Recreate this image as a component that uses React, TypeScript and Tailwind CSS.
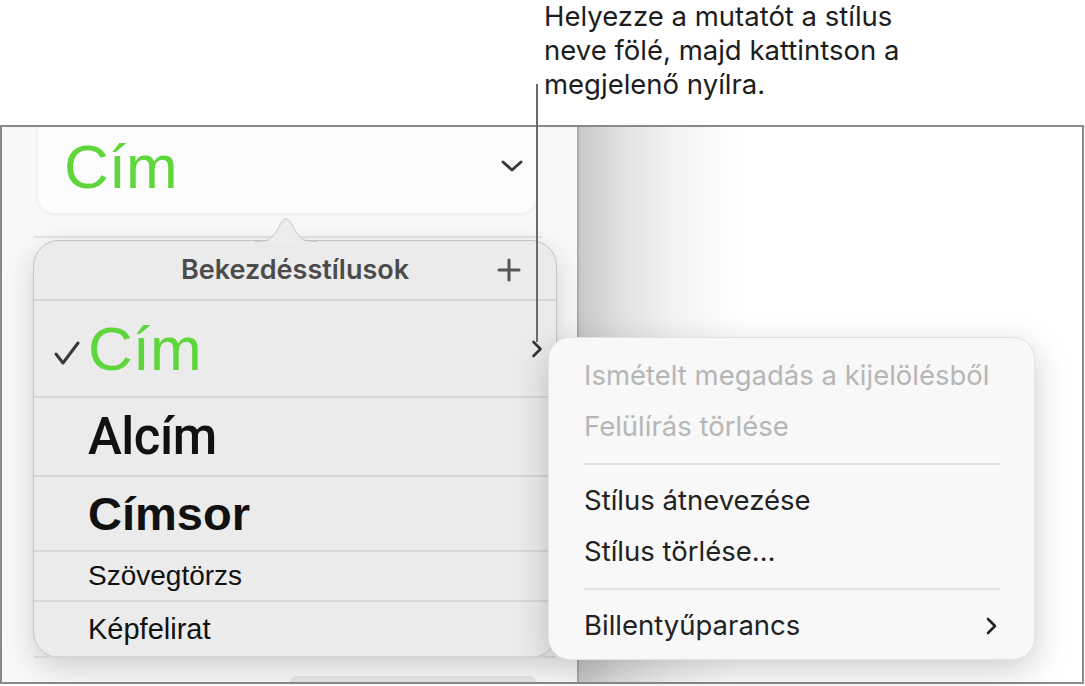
const Chevron = ({ className = '' }: { className?: string }) => (
  <svg className={className} viewBox="0 0 12 20" fill="none" stroke="currentColor" strokeWidth={2.6} strokeLinecap="round" strokeLinejoin="round">
    <path d="M2.5 3 L9.5 10 L2.5 17" />
  </svg>
);

const styles = [
  { name: 'Alcím', cls: "h-[79px] text-[51px] font-medium font-['Roboto',sans-serif] tracking-[-0.5px]" },
  { name: 'Címsor', cls: 'h-[75px] text-[47px] font-bold' },
  { name: 'Szövegtörzs', cls: 'h-[50px] text-[28px]' },
  { name: 'Képfelirat', cls: 'h-[56px] text-[29px] border-b-0' },
];

const menu = [
  { label: 'Ismételt megadás a kijelölésből', off: true },
  { label: 'Felülírás törlése', off: true },
  { sep: true },
  { label: 'Stílus átnevezése' },
  { label: 'Stílus törlése…' },
  { sep: true },
  { label: 'Billentyűparancs', sub: true },
];

export default function App() {
  return (
    <div className="relative w-[1085px] h-[686px] bg-white overflow-hidden font-['Inter',sans-serif]">
      {/* callout */}
      <div className="h-[125px] pl-[544px] -mt-[1px] text-[27.5px] leading-[34px] text-[#1d1d1d]">
        Helyezze a mutatót a stílus
        <br />
        neve fölé, majd kattintson a
        <br />
        megjelenő nyílra.
      </div>

      {/* window */}
      <div className="flex w-[1084px] h-[559px] mt-[1px] border-2 border-[#8a8a8a]">
        <div className="w-[577px] shrink-0 bg-[#f8f8f7] border-r-2 border-[#ababab] font-['Liberation_Sans',Arial,sans-serif]">
          <div className="ml-[36px] w-[498px] h-[86px] flex items-center justify-between pl-[26px] pr-[12px] rounded-b-[16px] bg-[#fcfcfc] shadow-[0_1px_4px_rgba(0,0,0,0.07)]">
            <span className="text-[62px] leading-none text-[#5fd63b] -mt-[6px]">Cím</span>
            <svg className="w-[24px] h-[14px] -mt-[8px] text-[#3a3a3a]" viewBox="0 0 24 14" fill="none" stroke="currentColor" strokeWidth={3} strokeLinecap="round" strokeLinejoin="round">
              <path d="M3 3 L12 11 L21 3" />
            </svg>
          </div>
          <div className="ml-[32px] mt-[23px] w-[508px] h-[2px] bg-[#e3e3e3]" />
          <div className="ml-[288px] mt-[438px] w-[246px] h-[6px] rounded-t-[6px] bg-[#e6e6e6]" />
        </div>
        <div className="flex-1 bg-[linear-gradient(to_right,#c8c8c8,#e2e2e2_45px,#f3f3f3_95px,#ffffff_160px)]" />
      </div>

      {/* leader line */}
      <div className="absolute left-[536px] top-[84px] w-[2px] h-[258px] bg-[#6a6a6a] z-30" />

      {/* paragraph styles popover */}
      <div className="absolute left-[33px] top-[240px] w-[524px] h-[418px] rounded-[26px] border border-[#c3c3c3] bg-[#ebebeb] shadow-[0_10px_30px_rgba(0,0,0,0.16)] font-['Liberation_Sans',Arial,sans-serif] text-[#111]">
        <svg className="absolute left-[221px] -top-[27px] w-[62px] h-[30px]" viewBox="0 0 62 30">
          <path d="M0 29 C11 29 15 27 20 20 L27 8 Q31 2 35 8 L42 20 C47 27 51 29 62 29 Z" fill="#ededed" />
          <path d="M0 27.5 C11 27.5 15 26 20 19.5 L27 7.5 Q31 1.5 35 7.5 L42 19.5 C47 26 51 27.5 62 27.5" fill="none" stroke="#c6c6c6" strokeWidth={1} />
        </svg>
        <div className="grid grid-cols-[1fr_auto_1fr] items-center h-[60px] border-b-2 border-[#d6d6d6]">
          <span />
          <span className="font-['Inter',sans-serif] font-semibold text-[27px] text-[#4b4b4b]">Bekezdésstílusok</span>
          <svg className="justify-self-end mr-[35px] w-[24px] h-[24px]" viewBox="0 0 24 24" stroke="#555" strokeWidth={3} strokeLinecap="round">
            <path d="M12 2 V22 M2 12 H22" />
          </svg>
        </div>
        <div className="flex items-center h-[97px] pl-[19px] pr-[13px] border-b-2 border-[#d6d6d6]">
          <svg className="w-[28px] h-[26px] mr-[7px] mt-[8px]" viewBox="0 0 28 26" fill="none" stroke="#383838" strokeWidth={3} strokeLinecap="round" strokeLinejoin="round">
            <path d="M3 14 L10 23 L25 3" />
          </svg>
          <span className="text-[62px] leading-none text-[#5fd63b]">Cím</span>
          <Chevron className="ml-auto w-[12px] h-[20px] text-[#333]" />
        </div>
        {styles.map((s) => (
          <div key={s.name} className={`flex items-center pl-[54px] leading-none border-b-2 border-[#d6d6d6] ${s.cls}`}>
            {s.name}
          </div>
        ))}
      </div>

      {/* style actions menu */}
      <div className="absolute left-[548px] top-[337px] w-[487px] h-[323px] pt-[12px] pl-[35px] pr-[34px] rounded-[22px] bg-[#f8f8f8] border border-[#e2e2e2] shadow-[0_10px_34px_rgba(0,0,0,0.2)] text-[27.5px]">
        {menu.map((m, i) =>
          m.sep ? (
            <div key={i} className="h-[23px] flex items-center">
              <div className="w-full h-[2px] bg-[#e2e2e2]" />
            </div>
          ) : (
            <div key={i} className={`h-[51px] flex items-center justify-between ${m.off ? 'text-[#b6b6b6]' : 'text-[#222]'}`}>
              {m.label}
              {m.sub && <Chevron className="w-[13px] h-[20px] mr-[2px] text-[#222]" />}
            </div>
          )
        )}
      </div>
    </div>
  );
}
